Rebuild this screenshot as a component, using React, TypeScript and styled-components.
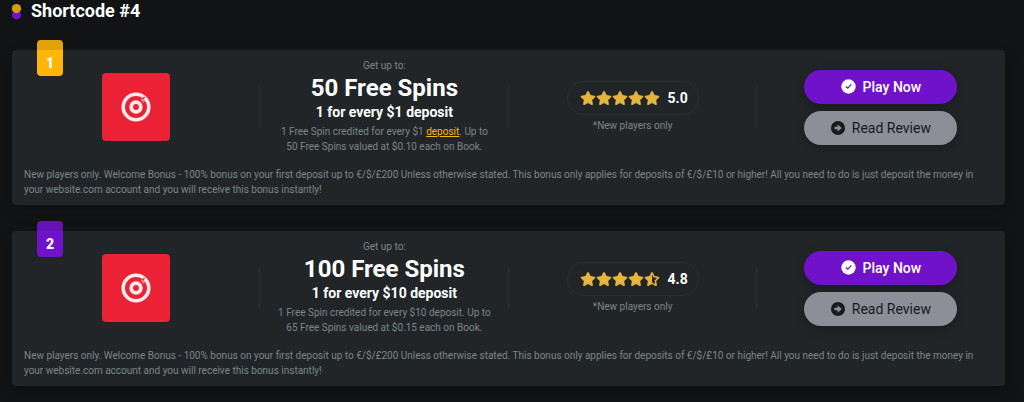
import React from "react";
import styled, { createGlobalStyle } from "styled-components";
import { FaStar, FaStarHalfStroke } from "react-icons/fa6";

const GlobalStyle = createGlobalStyle`
  *, *::before, *::after { box-sizing: border-box; }
  body {
    margin: 0;
    overflow: hidden;
    background: #111315;
    color: #fff;
    font-family: Roboto, "Liberation Sans", sans-serif;
  }
  h2, h3, p { margin: 0; }
`;

const Page = styled.main`
  min-height: 100vh;
  padding: 0 19px 0 12px;
`;

const Heading = styled.h2`
  display: flex;
  align-items: center;
  gap: 10px;
  height: 22px;
  font-size: 18px;
  line-height: 22px;
  font-weight: 700;
`;

const List = styled.div`
  display: flex;
  flex-direction: column;
  gap: 26px;
  padding-top: 28px;
`;

const Card = styled.article`
  position: relative;
  border-radius: 4px;
  background: #212528;
  box-shadow: 0 6px 16px rgba(0, 0, 0, 0.2);
`;

const Badge = styled.span<{ $color: string }>`
  position: absolute;
  top: -10px;
  left: 25px;
  width: 26px;
  height: 36px;
  padding-top: 8px;
  border-radius: 4px;
  background: linear-gradient(rgba(17, 19, 21, 0.12) 10px, transparent 10px), ${(p) => p.$color};
  font-size: 14px;
  line-height: 30px;
  font-weight: 900;
  text-align: center;
`;

const Columns = styled.div`
  display: grid;
  grid-template-columns: repeat(4, 1fr);
  align-items: center;
  padding: 8px 0;
`;

const Column = styled.div`
  display: flex;
  flex-direction: column;
  align-items: center;
  justify-content: center;
  position: relative;
  text-align: center;

  & + &::before {
    content: "";
    position: absolute;
    left: -1px;
    top: calc(50% - 21px);
    width: 1px;
    height: 42px;
    background: #2b2f33;
  }
`;

const BonusColumn = styled(Column)`
  padding-bottom: 2px;
`;

const Logo = styled.div`
  display: flex;
  align-items: center;
  justify-content: center;
  width: 68px;
  height: 68px;
  border-radius: 4px;
  background: #eb2135;
`;

const Small = styled.p`
  color: #7b8787;
  font-size: 10px;
  line-height: 15px;
`;

const Title = styled.h3`
  font-size: 24px;
  line-height: 31px;
  font-weight: 700;
`;

const Subtitle = styled.p`
  padding-bottom: 3px;
  font-size: 14px;
  line-height: 17px;
  font-weight: 700;
`;

const TextLink = styled.a`
  color: #ffb606;
  text-decoration: underline;
`;

const Rating = styled.div`
  display: flex;
  align-items: center;
  gap: 8px;
  height: 34px;
  margin-bottom: 3px;
  padding: 0 10px 0 12px;
  border: 1px solid #2b2f33;
  border-radius: 17px;
  font-size: 14px;
  font-weight: 700;
`;

const Stars = styled.span`
  display: flex;
  color: #e6b43c;
`;

const Actions = styled.div`
  display: flex;
  flex-direction: column;
  gap: 7px;
  width: 153px;
`;

const Action = styled.button<{ $primary?: boolean }>`
  display: flex;
  align-items: center;
  justify-content: center;
  gap: 7px;
  height: 34px;
  padding: 0;
  border: 0;
  border-radius: 17px;
  background: ${(p) => (p.$primary ? "#7012ca" : "#8c8e98")};
  box-shadow: 0 3px 10px rgba(0, 0, 0, 0.25);
  color: ${(p) => (p.$primary ? "#fff" : "#17191b")};
  font-family: inherit;
  font-size: 14px;
  font-weight: ${(p) => (p.$primary ? 500 : 400)};
  cursor: pointer;
`;

const Terms = styled(Small)`
  padding: 3px 12px 8px;
`;

const DotsIcon = () => (
  <svg width="9" height="18" viewBox="0 0 9 18" aria-hidden="true">
    <circle cx="4.5" cy="12.8" r="4.6" fill="#7012ca" />
    <circle cx="4.5" cy="6.6" r="4.6" fill="#d99b0f" />
  </svg>
);

const TargetIcon = () => (
  <svg width="32" height="32" viewBox="0 0 32 32" fill="none" stroke="#fdeaec" aria-hidden="true">
    <circle cx="16" cy="16" r="12.8" strokeWidth="3.6" />
    <path d="M22 8.6 24.6 6" stroke="#eb2135" strokeWidth="1.4" />
    <path d="M21.6 8.2 24.4 11" strokeWidth="2.4" strokeOpacity="0.5" />
    <circle cx="16" cy="16" r="4.8" strokeWidth="3.8" />
  </svg>
);

const CheckIcon = () => (
  <svg width="15" height="15" viewBox="0 0 15 15" aria-hidden="true">
    <circle cx="7.5" cy="7.5" r="7.2" fill="#fff" />
    <path d="M4.8 7.4 6.8 9.2 10.4 5.4" fill="none" stroke="#7012ca" strokeWidth="1.3" />
  </svg>
);

const ArrowIcon = () => (
  <svg width="14" height="14" viewBox="0 0 14 14" aria-hidden="true">
    <circle cx="7" cy="7" r="7" fill="#17191b" />
    <path d="M3.4 5.8H6.6V3.3L10.8 7 6.6 10.7V8.2H3.4Z" fill="#8c8e98" />
  </svg>
);

interface Offer {
  rank: number;
  color: string;
  title: string;
  subtitle: string;
  details: React.ReactNode;
  score: string;
}

const offers: Offer[] = [
  {
    rank: 1,
    color: "#ffb606",
    title: "50 Free Spins",
    subtitle: "1 for every $1 deposit",
    details: (
      <>
        1 Free Spin credited for every $1 <TextLink href="#deposit">deposit</TextLink>. Up to
        <br />
        50 Free Spins valued at $0.10 each on Book.
      </>
    ),
    score: "5.0",
  },
  {
    rank: 2,
    color: "#7012ca",
    title: "100 Free Spins",
    subtitle: "1 for every $10 deposit",
    details: (
      <>
        1 Free Spin credited for every $10 deposit. Up to
        <br />
        65 Free Spins valued at $0.15 each on Book.
      </>
    ),
    score: "4.8",
  },
];

const OfferCard = ({ offer }: { offer: Offer }) => (
  <Card>
    <Badge $color={offer.color}>{offer.rank}</Badge>
    <Columns>
      <Column>
        <Logo>
          <TargetIcon />
        </Logo>
      </Column>
      <BonusColumn>
        <Small>Get up to:</Small>
        <Title>{offer.title}</Title>
        <Subtitle>{offer.subtitle}</Subtitle>
        <Small>{offer.details}</Small>
      </BonusColumn>
      <Column>
        <Rating>
          <Stars>
            {[1, 2, 3, 4, 5].map((n) =>
              Number(offer.score) >= n ? <FaStar key={n} size={16} /> : <FaStarHalfStroke key={n} size={16} />
            )}
          </Stars>
          {offer.score}
        </Rating>
        <Small>*New players only</Small>
      </Column>
      <Column>
        <Actions>
          <Action $primary>
            <CheckIcon />
            Play Now
          </Action>
          <Action>
            <ArrowIcon />
            Read Review
          </Action>
        </Actions>
      </Column>
    </Columns>
    <Terms>
      New players only. Welcome Bonus - 100% bonus on your first deposit up to €/$/£200 Unless otherwise stated. This
      bonus only applies for deposits of €/$/£10 or higher! All you need to do is just deposit the money in your
      website.com account and you will receive this bonus instantly!
    </Terms>
  </Card>
);

export default function App() {
  return (
    <>
      <GlobalStyle />
      <Page>
        <Heading>
          <DotsIcon />
          Shortcode #4
        </Heading>
        <List>
          {offers.map((offer) => (
            <OfferCard key={offer.rank} offer={offer} />
          ))}
        </List>
      </Page>
    </>
  );
}
